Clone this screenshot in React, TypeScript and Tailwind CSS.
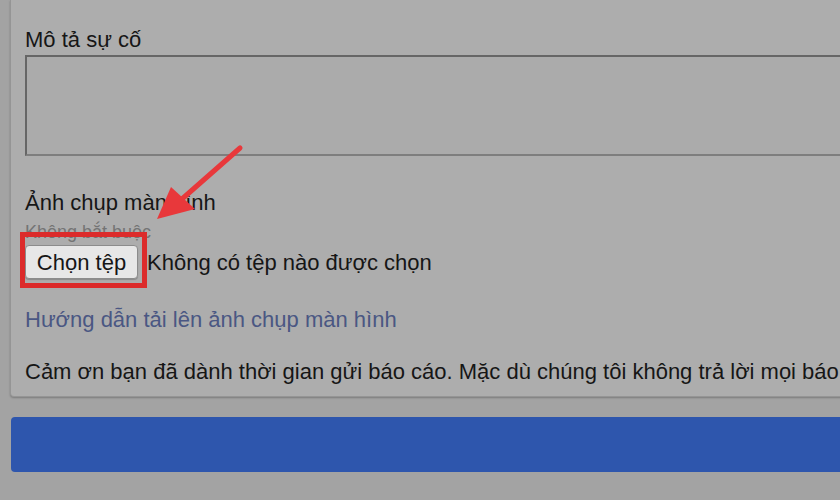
export default function App() {
  const font = { fontFamily: '"Liberation Sans", Arial, sans-serif' }

  return (
    <div className="relative w-[840px] h-[500px] overflow-hidden bg-[#a3a3a3]" style={font}>
      {/* Report form panel */}
      <div className="ml-[10px] w-[1000px] h-[397px] bg-[#adadad] border-l border-b border-[#959595] rounded-bl-[4px] shadow-[0_1px_2px_rgba(0,0,0,0.25)] pl-[14px] pt-[27px] text-[#161616]">
        <div className="text-[22px] leading-[26px]">Mô tả sự cố</div>
        <div className="mt-[2px] h-[101px] border-2 border-[#666666] border-b-[#7e7e7e] bg-[#ababab]" />

        <div className="mt-[34px] text-[22px] leading-[26px]">Ảnh chụp màn hình</div>
        <div className="mt-[5px] text-[18px] leading-[22px] text-[#747474]">Không bắt buộc</div>

        <div className="relative mt-[2px] flex items-center gap-[9px]">
          <button className="h-[34px] w-[113px] rounded-[4px] border border-[#8c8c8c] bg-[#e7e7e7] text-[22px] text-[#161616] shadow-[0_1px_1px_rgba(0,0,0,0.2)]">
            Chọn tệp
          </button>
          <span className="text-[22px]">Không có tệp nào được chọn</span>
          <div className="pointer-events-none absolute left-[-5px] top-[-13px] h-[56px] w-[127px] border-[5px] border-[#dc2b2b]" />
        </div>

        <div className="mt-[28px] text-[22px] leading-[26px] text-[#4a5783]">
          Hướng dẫn tải lên ảnh chụp màn hình
        </div>

        <div className="mt-[26px] whitespace-nowrap text-[22px] leading-[26px]">
          Cảm ơn bạn đã dành thời gian gửi báo cáo. Mặc dù chúng tôi không trả lời mọi báo cáo
        </div>
      </div>

      {/* Submit bar */}
      <div className="mt-[20px] ml-[11px] h-[55px] w-[900px] rounded-[4px] bg-[#2e56ad]" />

      {/* Annotation arrow */}
      <svg className="pointer-events-none absolute left-0 top-0" width="840" height="500" viewBox="0 0 840 500">
        <line x1="240" y1="148" x2="182" y2="199" stroke="#e8383b" strokeWidth="5" strokeLinecap="round" />
        <polygon points="157,219 171,187 195,209" fill="#e8383b" />
      </svg>
    </div>
  )
}
